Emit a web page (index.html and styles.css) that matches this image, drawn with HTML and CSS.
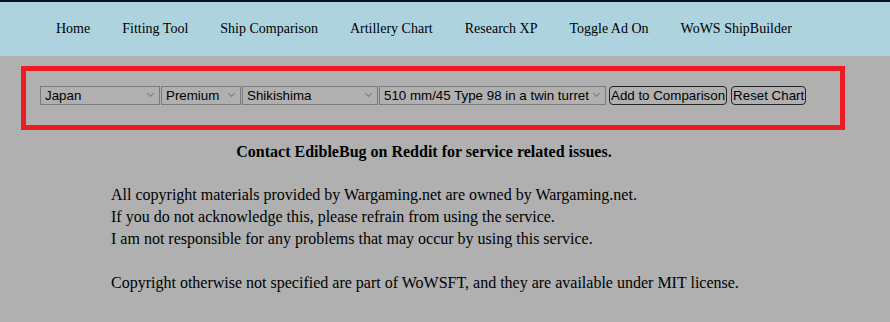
FILE: index.html
```html
<!DOCTYPE html>
<html lang="en">
<head>
    <meta charset="UTF-8">
    <meta name="viewport" content="width=device-width, initial-scale=1.0">
    <title>WoWSFT Artillery Chart</title>
    <link rel="stylesheet" href="styles.css">
</head>
<body>
    <div class="topline"></div>
    <nav>
        <ul>
            <li>Home</li>
            <li>Fitting Tool</li>
            <li>Ship Comparison</li>
            <li>Artillery Chart</li>
            <li>Research XP</li>
            <li>Toggle Ad On</li>
            <li>WoWS ShipBuilder</li>
        </ul>
    </nav>
    <div class="chart-form">
        <div class="selects">
            <span class="sel sel-nation"><select><option>Japan</option></select></span>
            <span class="sel sel-type"><select><option>Premium</option></select></span>
            <span class="sel sel-ship"><select><option>Shikishima</option></select></span>
            <span class="sel sel-gun"><select><option>510 mm/45 Type 98 in a twin turret</option></select></span>
        </div>
        <div class="buttons">
            <button>Add to Comparison</button>
            <button>Reset Chart</button>
        </div>
    </div>
    <div class="content">
        <p class="contact">Contact EdibleBug on Reddit for service related issues.</p>
        <div class="notice">
            All copyright materials provided by Wargaming.net are owned by Wargaming.net.<br>
            If you do not acknowledge this, please refrain from using the service.<br>
            I am not responsible for any problems that may occur by using this service.<br>
            <br>
            Copyright otherwise not specified are part of WoWSFT, and they are available under MIT license.
        </div>
    </div>
</body>
</html>
```

FILE: styles.css
```css
html, body{
    margin : 0;
    padding : 0;
    background : #b0b0b0;
    font-family: "Liberation Serif", "Times New Roman", serif;
    color : #000;
}
.topline{
    height : 2px;
    background : #0b0f24;
}
nav{
    background : #add3df;
    height : 54px;
}
nav ul{
    margin : 0;
    padding : 0 0 0 40px;
    list-style: none;
    display : flex;
    align-items: center;
    height : 100%;
    font-size : 14px;
}
nav li{
    padding : 0 16px;
    cursor : pointer;
}
.chart-form{
    box-sizing: border-box;
    width : 824px;
    height : 64px;
    margin : 10px 0 0 21px;
    border : 5px solid #ed1c24;
    padding : 15px 14px 0 14px;
    display : flex;
    align-items: flex-start;
}
.selects{
    display : flex;
    gap : 1px;
}
.sel{
    position: relative;
    display : block;
}
.sel::after{
    content : "";
    position: absolute;
    right : 7px;
    top : 5px;
    width : 4px;
    height : 4px;
    border-right : 1px solid #7c7c7c;
    border-bottom : 1px solid #7c7c7c;
    transform: rotate(45deg);
    pointer-events: none;
}
select{
    -webkit-appearance: none;
    appearance: none;
    box-sizing: border-box;
    width : 100%;
    height : 19px;
    margin : 0;
    padding : 0 16px 0 4px;
    font-family: "Liberation Sans", Arial, sans-serif;
    font-size : 13.33px;
    color : #000;
    background : transparent;
    border : 1px solid #7a7a7a;
    border-radius: 0;
    display : block;
}
.sel-nation{ width : 120px; }
.sel-type{ width : 80px; }
.sel-ship{ width : 136px; }
.sel-gun{ width : 227px; }
.buttons{
    display : flex;
    gap : 4px;
    margin-left : 3px;
}
button{
    box-sizing: border-box;
    height : 19px;
    margin : 0;
    padding : 0 1px;
    font-family: "Liberation Sans", Arial, sans-serif;
    font-size : 13.33px;
    color : #000;
    background : transparent;
    border : 1px solid #222;
    border-radius: 4px;
}
.content{
    width : 848px;
}
.contact{
    margin : 11px 0 0 0;
    text-align: center;
    font-weight: bold;
    font-size : 16px;
    line-height: 22px;
}
.notice{
    margin-top : 21px;
    padding-left : 111px;
    font-size : 16px;
    line-height: 22px;
}
```
